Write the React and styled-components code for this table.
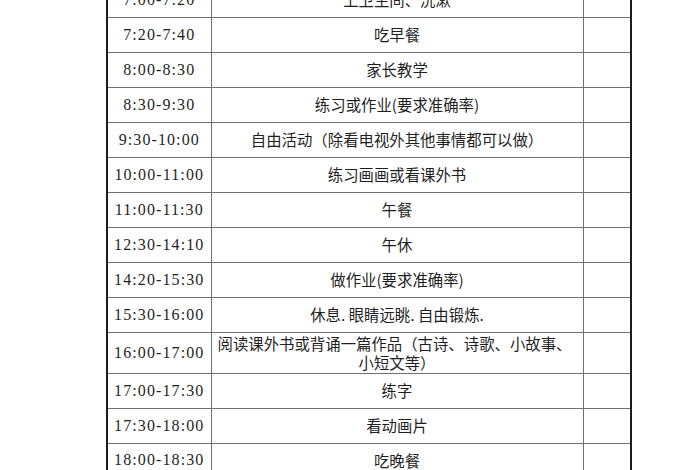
import React from 'react'
import styled, { createGlobalStyle } from 'styled-components'

const Global = createGlobalStyle`
  html, body {
    margin: 0;
    padding: 0;
    background: #fff;
  }
  body {
    width: 700px;
    height: 470px;
    overflow: hidden;
  }
`

const Sheet = styled.table`
  margin: -19px 0 0 106px;
  width: 526px;
  table-layout: fixed;
  border-collapse: collapse;
  border: 2px solid #1c1c1c;
  color: #1f1f1f;
`

const Row = styled.tr`
  height: ${p => (p.tall ? 41 : 35)}px;
`

const Cell = styled.td`
  border: 1.5px solid #707070;
  padding: 0;
  text-align: center;
  vertical-align: middle;
  overflow: hidden;
  white-space: nowrap;
`

const Time = styled(Cell)`
  font-family: "Liberation Serif", serif;
  font-size: 16px;
  letter-spacing: 1.1px;
`

const Task = styled(Cell)`
  font-family: "Noto Sans CJK SC", sans-serif;
  font-size: 15.4px;
  line-height: 19px;
`

const Line = styled.div`
  text-align: ${p => (p.left ? 'left' : 'center')};
  padding-left: ${p => (p.left ? '6px' : '0')};
  line-height: 19px;
`

const rows = [
  ['7:00-7:20', '上卫生间、洗漱'],
  ['7:20-7:40', '吃早餐'],
  ['8:00-8:30', '家长教学'],
  ['8:30-9:30', '练习或作业(要求准确率)'],
  ['9:30-10:00', '自由活动（除看电视外其他事情都可以做）'],
  ['10:00-11:00', '练习画画或看课外书'],
  ['11:00-11:30', '午餐'],
  ['12:30-14:10', '午休'],
  ['14:20-15:30', '做作业(要求准确率)'],
  ['15:30-16:00', '休息. 眼睛远眺. 自由锻炼.'],
  ['16:00-17:00', ['阅读课外书或背诵一篇作品（古诗、诗歌、小故事、', '小短文等）']],
  ['17:00-17:30', '练字'],
  ['17:30-18:00', '看动画片'],
  ['18:00-18:30', '吃晚餐'],
]

export default function App() {
  return (
    <>
      <Global />
      <Sheet>
        <colgroup>
          <col style={{ width: 104 }} />
          <col style={{ width: 372 }} />
          <col />
        </colgroup>
        <tbody>
          {rows.map(([time, task]) => (
            <Row key={time} tall={Array.isArray(task)}>
              <Time>{time}</Time>
              <Task>
                {Array.isArray(task) ? (
                  <>
                    <Line left>{task[0]}</Line>
                    <Line>{task[1]}</Line>
                  </>
                ) : (
                  task
                )}
              </Task>
              <Cell />
            </Row>
          ))}
        </tbody>
      </Sheet>
    </>
  )
}
